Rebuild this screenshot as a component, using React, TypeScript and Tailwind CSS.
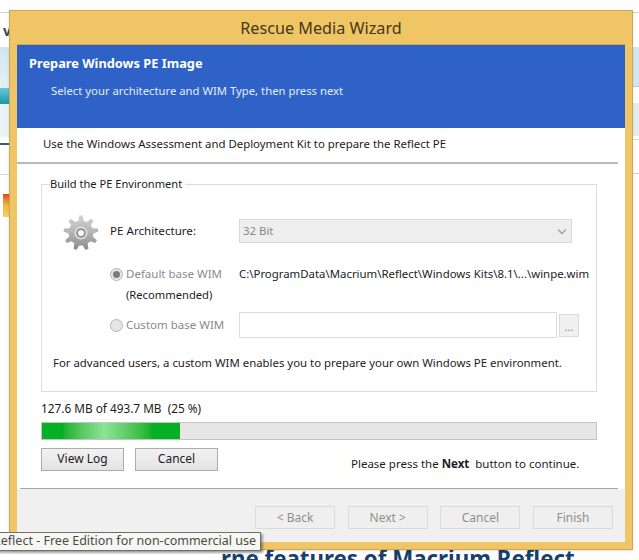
const font = { fontFamily: '"Noto Sans", sans-serif' };

function gearPath(cx: number, cy: number, outer: number, inner: number, teeth: number) {
  const pts: string[] = [];
  for (let i = 0; i < teeth; i++) {
    const a = (i / teeth) * Math.PI * 2 - Math.PI / 2;
    const step = (Math.PI * 2) / teeth;
    const offsets: [number, number][] = [
      [-0.3, inner],
      [-0.13, outer],
      [0.13, outer],
      [0.3, inner],
    ];
    for (const [o, r] of offsets) {
      const t = a + o * step;
      pts.push(`${(cx + Math.cos(t) * r).toFixed(2)} ${(cy + Math.sin(t) * r).toFixed(2)}`);
    }
  }
  return "M" + pts.join("L") + "Z";
}

function GearIcon() {
  return (
    <svg width="36" height="36" viewBox="0 0 36 36" className="ml-[10px] mt-[4px] shrink-0">
      <defs>
        <linearGradient id="gearFill" x1="0" y1="0" x2="0" y2="1">
          <stop offset="0" stopColor="#d2d2d2" />
          <stop offset="0.5" stopColor="#b4b4b4" />
          <stop offset="1" stopColor="#8a8a8a" />
        </linearGradient>
      </defs>
      <path d={gearPath(18, 18, 17.5, 12.5, 9)} fill="url(#gearFill)" />
      <circle cx="18" cy="18" r="6.5" fill="#e0e0e0" />
      <circle cx="18" cy="18" r="4.8" fill="#8f8f8f" />
      <circle cx="18" cy="18" r="3" fill="#f6f6f6" />
    </svg>
  );
}

function Radio({ checked }: { checked?: boolean }) {
  return (
    <span className="flex h-[13px] w-[13px] shrink-0 items-center justify-center rounded-full border border-[#b5b5b5] bg-[#e6e6e6]">
      {checked && <span className="h-[7px] w-[7px] rounded-full bg-[#7a7a7a]" />}
    </span>
  );
}

function FooterButton({ label }: { label: string }) {
  return (
    <button className="flex h-[23px] w-[80px] items-center justify-center border border-[#dadada] bg-[#efefef] pt-px text-[12px] text-[#8e8e8e]">
      {label}
    </button>
  );
}

function ActionButton({ label }: { label: string }) {
  return (
    <button className="flex h-[23px] w-[83px] items-center justify-center border border-[#acacac] bg-gradient-to-b from-[#f2f2f2] to-[#e3e3e3] text-[12px] text-[#1c1c1c]">
      {label}
    </button>
  );
}

function Backdrop() {
  return (
    <>
      <div className="absolute left-0 top-[12px] h-px w-[9px] bg-[#d0d0d0]" />
      <span className="absolute left-[3px] top-[20px] text-[14px] font-bold text-[#444]">v</span>
      <div className="absolute left-0 top-[47px] h-[41px] w-[9px] bg-gradient-to-b from-[#d3e6f1] to-[#e4f0f5]" />
      <div className="absolute left-0 top-[88px] h-[16px] w-[9px] bg-gradient-to-b from-[#5fcbdc] to-[#1797ab]" />
      <div className="absolute left-0 top-[104px] h-[33px] w-[9px] bg-[#eaf3f6]" />
      <div className="absolute left-0 top-[143px] h-[2px] w-[9px] bg-[#35588f]" />
      <div className="absolute left-0 top-[174px] h-px w-[9px] bg-[#d8d8d8]" />
      <div className="absolute left-[3px] top-[194px] h-[23px] w-[6px] bg-gradient-to-b from-[#d9432c] via-[#f2b83a] to-[#f6cf6c]" />
      <div className="absolute left-[633px] top-[12px] h-px w-[6px] bg-[#d0d0d0]" />
      <div className="absolute left-[633px] top-[47px] h-[39px] w-[6px] bg-[#d3e6f1]" />
      <div className="absolute left-[633px] top-[86px] h-px w-[6px] bg-[#c4c4c4]" />
      <div className="absolute left-[633px] top-[103px] h-[33px] w-[6px] bg-[#e4edf2]" />
      <div className="absolute left-[633px] top-[139px] h-px w-[6px] bg-[#d8d8d8]" />
      <div className="absolute left-[633px] top-[173px] h-px w-[6px] bg-[#d0d0d0]" />
      <div className="absolute left-[221px] top-[545px] whitespace-nowrap text-[22.3px] font-bold leading-[28px] text-[#17406d]">
        rne features of Macrium Reflect
      </div>
    </>
  );
}

export default function App() {
  return (
    <div className="relative h-[560px] w-[639px] overflow-hidden bg-white text-[11.4px] text-[#1c1c1c]" style={font}>
      <Backdrop />

      {/* wizard window */}
      <div className="absolute left-[9px] top-[10px] flex h-[540px] w-[624px] flex-col border border-[#c9a75c] bg-[#f0c566] px-[7px] pb-[7px] shadow-sm">
        <div className="flex h-[33px] shrink-0 items-center justify-center pt-px text-[16.2px] text-[#43371c]">
          Rescue Media Wizard
        </div>
        <div className="flex flex-1 flex-col border-t border-[#c9a75c] bg-white">
          <div className="h-[83px] shrink-0 bg-[#2f62c6] pl-[12px] pt-[10px] text-white">
            <div className="text-[12.8px] font-bold leading-[17px]">Prepare Windows PE Image</div>
            <div className="mt-[11px] pl-[22px] text-[11.3px] leading-[16px] text-[#e4ecfa]">
              Select your architecture and WIM Type, then press next
            </div>
          </div>
          <div className="flex h-[34px] shrink-0 items-center pb-[2px] pl-[26px] pr-[7px]">
            Use the Windows Assessment and Deployment Kit to prepare the Reflect PE
          </div>
          <div className="mr-[7px] h-[2px] shrink-0 bg-[#b9b9b9]" />

          <div className="flex flex-1 flex-col pl-[24px] pr-[27px]">
            <fieldset className="mt-[12px] h-[216px] w-[556px] min-w-0 border border-[#dcdcdc] pl-[11px]">
              <legend className="ml-[-3px] pr-[3px] text-[11.1px] leading-[16px]">Build the PE Environment</legend>
              <div className="mt-[27px] flex h-[24px] items-center">
                <GearIcon />
                <span className="ml-[11px] w-[129px] text-[11.6px]">PE Architecture:</span>
                <div className="flex h-[24px] w-[333px] items-center justify-between border border-[#d9d9d9] bg-[#eeeeee] px-[3px] text-[#8a8a8a]">
                  <span>32 Bit</span>
                  <svg width="10" height="7" viewBox="0 0 10 7" className="mr-[1px]">
                    <path d="M1 1.5l4 4 4-4" fill="none" stroke="#a8a8a8" strokeWidth="1.6" />
                  </svg>
                </div>
              </div>
              <div className="mt-[21px] flex h-[20px] items-center pl-[57px]">
                <Radio checked />
                <span className="ml-[3px] w-[113px] text-[11.5px] text-[#8a8a8a]">Default base WIM</span>
                <span className="whitespace-nowrap">C:\ProgramData\Macrium\Reflect\Windows Kits\8.1\...\winpe.wim</span>
              </div>
              <div className="h-[22px] pl-[73px] text-[11.2px] leading-[22px]">(Recommended)</div>
              <div className="mt-[6px] flex h-[26px] items-center pl-[57px]">
                <Radio />
                <span className="ml-[3px] w-[113px] text-[11.5px] text-[#8a8a8a]">Custom base WIM</span>
                <div className="h-[26px] w-[318px] border border-[#dcdcdc] bg-white" />
                <div className="ml-[2px] flex h-[23px] w-[20px] items-center justify-center border border-[#dcdcdc] bg-[#f0f0f0] pt-[3px] text-[#8a8a8a]">
                  ...
                </div>
              </div>
              <div className="mt-[17px] whitespace-nowrap leading-[16px]">
                For advanced users, a custom WIM enables you to prepare your own Windows PE environment.
              </div>
            </fieldset>

            <div className="mt-[8px] text-[11.8px] leading-[16px]">127.6 MB of 493.7 MB&nbsp; (25 %)</div>
            <div className="mt-[6px] h-[18px] w-[556px] border border-[#c4c4c4] bg-[#e6e6e6]">
              <div className="h-full w-[138px] bg-gradient-to-r from-[#06b025] from-15% via-[#8be596] via-45% to-[#06b025] to-80%" />
            </div>
            <div className="mt-[6px] flex items-center gap-[11px]">
              <ActionButton label="View Log" />
              <ActionButton label="Cancel" />
              <span className="ml-[122px] mt-[9px] whitespace-nowrap text-[11.5px]">
                Please press the <b>Next</b>&nbsp; button to continue.
              </span>
            </div>
          </div>

          <div className="ml-[3px] mr-[7px] h-px shrink-0 bg-[#a8a8a8]" />
          <div className="flex h-[53px] shrink-0 items-start justify-end gap-[12.67px] bg-[#f0f0f0] pr-[12px] pt-[17px]">
            <FooterButton label="< Back" />
            <FooterButton label="Next >" />
            <FooterButton label="Cancel" />
            <FooterButton label="Finish" />
          </div>
        </div>
      </div>

      {/* taskbar tooltip */}
      <div className="absolute left-[-9px] top-[532px] flex h-[19px] w-[270px] items-center whitespace-nowrap border border-[#6e6e6e] bg-[#f7f7f2] pl-[1px] text-[12.5px] text-[#4a4a4a] shadow-[2px_2px_2px_rgba(0,0,0,0.35)]">
        Reflect - Free Edition for non-commercial use
      </div>
    </div>
  );
}
